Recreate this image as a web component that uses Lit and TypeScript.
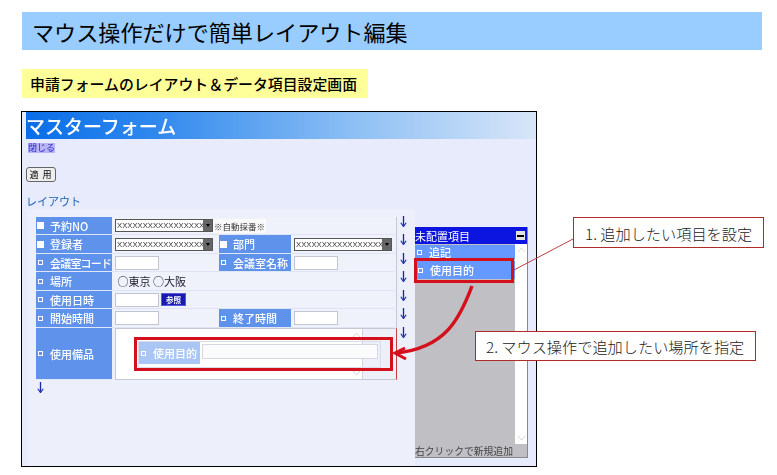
import { LitElement, html, css, svg } from "lit";
import { customElement } from "lit/decorators.js";

const arrow = html`<svg class="arr" width="7" height="11" viewBox="0 0 7 11"><path d="M3.5 0V9.500" stroke="#1428a8" stroke-width="1.3" fill="none"/><path d="M.8 6.800L3.500 10.600L6.200 6.800" stroke="#1428a8" stroke-width="1.100" fill="none"/></svg>`;

@customElement("app-root")
export class AppRoot extends LitElement {
  static styles = css`
    :host { display: block; position: relative; width: 777px; height: 475px; background: #fff; overflow: hidden; font-family: "Noto Sans CJK JP", "Liberation Sans", sans-serif; color: #000; }
    .page { display: flex; flex-direction: column; align-items: flex-start; padding: 12px 0 0 22px; }
    .banner { width: 740px; height: 38px; box-sizing: border-box; background: #99ccff; display: flex; align-items: center; padding-left: 10px; font-size: 22.1px; line-height: 1; white-space: nowrap; }
    .yellow { margin-top: 19px; height: 29px; width: 338px; padding-left: 8px; background: #ffff99; display: flex; align-items: center; font-size: 14.9px; font-weight: 500; white-space: nowrap; }
    .win { margin: 13px 0 0 -1px; width: 514px; height: 354px; border: 1px solid #000; background: #e7ebfb; display: flex; flex-direction: column; filter: blur(0.25px); }
    .title { margin-left: 4px; height: 27px; flex: none; background: linear-gradient(90deg, #0a6ee8 0%, #2f88ee 25%, #8fc0f4 65%, #d8e6f8 100%); color: #fff; font-size: 19px; line-height: 27px; font-weight: 500; white-space: nowrap; }
    .close { margin: 4px 0 0 6px; font-size: 9px; line-height: 10px; color: #2a2ad0; background: #b9b4f4; width: 27px; white-space: nowrap; }
    .btn { margin: 14px 0 0 4px; width: 28px; height: 13px; border: 1px solid #666; border-radius: 3px; background: #eeeeee; font-size: 9px; line-height: 13px; text-align: center; letter-spacing: 1px; }
    .lay { margin: 12px 0 0 4px; font-size: 11px; line-height: 15px; color: #2060b8; }
    .main { margin: 0 0 0 5px; width: 501px; display: flex; flex: 1; min-height: 0; }
    .panel { width: 388px; flex: none; background: #edf0fb; padding: 8px 0 0 9px; box-sizing: border-box; }
    .grid { display: grid; grid-template-columns: 76px 107px 72px 106px 18px; grid-template-rows: 18px 19px 18px 19px 18px 19px 52px; }
    .l { background: #5f92ea; color: #fff; font-size: 11px; font-weight: 500; display: flex; align-items: center; white-space: nowrap; padding-left: 1px; overflow: hidden; border-bottom: 1px solid #dfe6f8; box-sizing: border-box; }
    .l.tight { letter-spacing: -0.8px; }
    .cb { width: 3px; height: 3px; border: 1px solid #fff; flex: none; margin: 0 7px 0 1px; }
    .cb.on { width: 7px; height: 7px; border: 0; background: #fff; margin: 0 6px 0 0; }
    .f { background: #f0f2fb; display: flex; align-items: center; padding-left: 3px; border-bottom: 1px solid #dfe3f4; box-sizing: border-box; font-size: 11px; color: #223; white-space: nowrap; }
    .wide { grid-column: span 3; border-right: 1px solid #c4c8d4; }
    .f.nar { border-right: 1px solid #c4c8d4; }
    .a { display: flex; justify-content: flex-start; padding-left: 3px; align-items: flex-start; }
    .a svg { margin-top: -1px; }
    .sel { width: 98px; height: 13px; box-sizing: border-box; border: 1px solid #555; background: #fff; font: 7.700px/11px "Liberation Sans", sans-serif; color: #333; display: flex; justify-content: space-between; padding-left: 1px; flex: none; }
    .sel u { text-decoration: none; overflow: hidden; min-width: 0; }
    .sel i { width: 9px; height: 11px; background: #666; flex: none; display: flex; align-items: center; justify-content: center; }
    .sel i::after { content: ""; width: 0; height: 0; border: 2.500px solid transparent; border-top: 3px solid #000; border-bottom: 0; }
    .auto { height: 14px; background: #fafafa; font-size: 8.500px; line-height: 14px; color: #333; padding: 0 1px; }
    .in { width: 44px; height: 14px; box-sizing: border-box; background: #fff; border: 1px solid #c2c6d2; }
    .ref { margin-left: 2px; width: 25px; height: 13px; background: #1a1ab0; border: 1px solid #5a5ae0; box-sizing: border-box; color: #fff; font-size: 7.500px; line-height: 11px; text-align: center; font-weight: 700; }
    .equip { position: relative; grid-column: span 3; background: #fff; margin-left: 3px; border: 1px solid #c4c8d4; border-right: 1px solid #c04040; box-sizing: border-box; display: flex; align-items: flex-start; }
    .well { width: 247px; height: 100%; background: #fff; border-right: 1px solid #d4d4dc; box-sizing: border-box; flex: none; display: flex; flex-direction: column; align-items: flex-end; justify-content: space-between; padding: 3px 1px; }
    .rest { flex: 1; height: 100%; background: #edf0fb; }
    .nest { position: absolute; left: 22px; top: 12px; width: 243px; height: 27px; box-sizing: border-box; display: flex; align-items: stretch; border: 1px solid #d8dbe8; }
    .nest b { width: 61px; background: #a9c6f5; color: #fff; font-weight: 500; font-size: 11px; display: flex; align-items: center; padding-left: 1px; box-sizing: border-box; height: 22px; }
    .nest em { flex: 1; margin: 2px 2px 8px 2px; background: #fbfbfd; border: 1px solid #d5d8e2; }
    .below { display: flex; padding: 2px 0 0 1px; }
    .pal { margin-top: 18px; width: 113px; height: 231px; display: flex; flex-direction: column; flex: none; border-right: 1px solid #888; box-sizing: border-box; }
    .ph { height: 17px; background: #0c14e0; color: #fff; font-size: 11px; line-height: 16px; display: flex; justify-content: space-between; align-items: center; white-space: nowrap; flex: none; }
    .ph i { width: 9px; height: 9px; background: #e0e0e0; margin-right: 2px; display: flex; align-items: center; justify-content: center; }
    .ph i::after { content: ""; width: 7px; height: 2px; background: #000; }
    .pb { flex: 1; display: flex; min-height: 0; }
    .list { flex: 1; background: #c0c0c4; display: flex; flex-direction: column; }
    .it { background: #6699ff; color: #fff; font-size: 11px; font-weight: 500; display: flex; align-items: center; padding-left: 1px; white-space: nowrap; }
    .it.one { height: 14px; margin-top: 1px; }
    .it.two { height: 18px; margin: 2px 0 0 1px; }
    .sb { width: 12px; background: #fff; flex: none; display: flex; flex-direction: column; justify-content: space-between; align-items: center; padding: 3px 0; box-sizing: border-box; }
    .sb svg, .well svg { display: block; }
    .pf { height: 14px; flex: none; background: #c0c0c4; color: #444; font-size: 9.800px; line-height: 14px; white-space: nowrap; border-bottom: 1px solid #888; box-sizing: border-box; }
    .call { position: absolute; background: #fff; border: 1px solid #b02a2a; box-sizing: border-box; display: flex; align-items: center; font-size: 15.200px; font-weight: 300; color: #222; white-space: nowrap; }
    .c1 { left: 573px; top: 217px; width: 191px; height: 31px; padding-left: 11px; }
    .c2 { left: 475px; top: 331px; width: 281px; height: 30px; padding-left: 10px; }
    .rr { position: absolute; border: 3px solid #d3101c; box-sizing: border-box; }
    .r1 { left: 414px; top: 258px; width: 100px; height: 25px; }
    .r2 { left: 134px; top: 337px; width: 259px; height: 34px; }
    .over { position: absolute; left: 0; top: 0; pointer-events: none; }
  `;

  private lab(t: string, on = false, tight = false) {
    return html`<div class="l ${tight ? "tight" : ""}"><span class="cb ${on ? "on" : ""}"></span>${t}</div>`;
  }

  private sel() {
    return html`<div class="sel"><u>XXXXXXXXXXXXXXXXX</u><i></i></div>`;
  }

  private chevrons() {
    return html`
      <svg width="9" height="6" viewBox="0 0 9 6"><path d="M1 5L4.500 1L8 5" fill="none" stroke="#d8dcc8"/></svg>
      <svg width="9" height="6" viewBox="0 0 9 6"><path d="M1 1L4.500 5L8 1" fill="none" stroke="#d0d4d0"/></svg>`;
  }

  render() {
    return html`
      <div class="page">
        <div class="banner">マウス操作だけで簡単レイアウト編集</div>
        <div class="yellow">申請フォームのレイアウト＆データ項目設定画面</div>
        <div class="win">
          <div class="title">マスターフォーム</div>
          <div class="close">閉じる</div>
          <div class="btn">適 用</div>
          <div class="lay">レイアウト</div>
          <div class="main">
            <div class="panel">
              <div class="grid">
                ${this.lab("予約NO", true)}
                <div class="f wide">${this.sel()}<span class="auto">※自動採番※</span></div>
                <div class="a">${arrow}</div>

                ${this.lab("登録者", true)}
                <div class="f">${this.sel()}</div>
                ${this.lab("部門", true)}
                <div class="f nar">${this.sel()}</div>
                <div class="a">${arrow}</div>

                ${this.lab("会議室コード", false, true)}
                <div class="f"><span class="in"></span></div>
                ${this.lab("会議室名称")}
                <div class="f nar"><span class="in"></span></div>
                <div class="a">${arrow}</div>

                ${this.lab("場所")}
                <div class="f wide">&nbsp;○東京 ○大阪</div>
                <div class="a">${arrow}</div>

                ${this.lab("使用日時")}
                <div class="f wide"><span class="in"></span><span class="ref">参照</span></div>
                <div class="a">${arrow}</div>

                ${this.lab("開始時間")}
                <div class="f"><span class="in"></span></div>
                ${this.lab("終了時間")}
                <div class="f nar"><span class="in"></span></div>
                <div class="a">${arrow}</div>

                ${this.lab("使用備品")}
                <div class="equip">
                  <div class="well">${this.chevrons()}</div>
                  <div class="rest"></div>
                  <div class="nest"><b><span class="cb"></span>使用目的</b><em></em></div>
                </div>
                <div class="a">${arrow}</div>
              </div>
              <div class="below">${arrow}</div>
            </div>
            <div class="pal">
              <div class="ph">未配置項目<i></i></div>
              <div class="pb">
                <div class="list">
                  <div class="it one"><span class="cb"></span>追記</div>
                  <div class="it two"><span class="cb"></span>使用目的</div>
                </div>
                <div class="sb">${this.chevrons()}</div>
              </div>
              <div class="pf">右クリックで新規追加</div>
            </div>
          </div>
        </div>
      </div>

      <div class="rr r1"></div>
      <div class="rr r2"></div>
      <svg class="over" width="777" height="475" viewBox="0 0 777 475">
        ${svg`<path d="M514 270L573 239" stroke="#b84040" stroke-width="1" fill="none"/>
        <path d="M472 286C460 318 446 348 396 353" stroke="#d3101c" stroke-width="3.500" fill="none"/>
        <path d="M405 348L395 353L406 359" stroke="#d3101c" stroke-width="3" fill="none"/>`}
      </svg>
      <div class="call c1">1. 追加したい項目を設定</div>
      <div class="call c2">2. マウス操作で追加したい場所を指定</div>
    `;
  }
}
